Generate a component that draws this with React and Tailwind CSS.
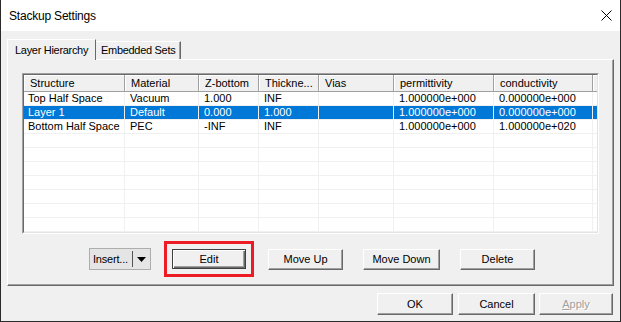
import React from "react";

const cols = [
  { name: "Structure", w: "w-[101px]" },
  { name: "Material", w: "w-[74px]" },
  { name: "Z-bottom", w: "w-[60px]" },
  { name: "Thickne...", w: "w-[60px]" },
  { name: "Vias", w: "w-[75px]" },
  { name: "permittivity", w: "w-[100px]" },
  { name: "conductivity", w: "w-[99px]" },
];

const rows = [
  ["Top Half Space", "Vacuum", "1.000", "INF", "", "1.000000e+000", "0.000000e+000"],
  ["Layer 1", "Default", "0.000", "1.000", "", "1.000000e+000", "0.000000e+000"],
  ["Bottom Half Space", "PEC", "-INF", "INF", "", "1.000000e+000", "1.000000e+020"],
  ["", "", "", "", "", "", ""],
  ["", "", "", "", "", "", ""],
  ["", "", "", "", "", "", ""],
  ["", "", "", "", "", "", ""],
  ["", "", "", "", "", "", ""],
  ["", "", "", "", "", "", ""],
  ["", "", "", "", "", "", ""],
];

const btn =
  "flex items-center justify-center bg-[#f0f0f0] border border-t-white border-l-white border-r-[#696969] border-b-[#696969] shadow-[inset_-1px_-1px_#a0a0a0]";

export default function App() {
  return (
    <div className="w-[621px] h-[322px] flex flex-col bg-[#f0f0f0] border-x border-b border-[#2b2b2b] text-[11px] text-black font-['Liberation_Sans',Arial,sans-serif] leading-none overflow-hidden">
      {/* Title bar */}
      <div className="h-[31px] shrink-0 bg-white flex items-center justify-between pl-[8px] pr-[8px]">
        <span className="text-[12px] tracking-[-0.2px]">Stackup Settings</span>
        <svg width="11" height="11" viewBox="0 0 11 11">
          <path d="M0.5 0.5 L10.5 10.5 M10.5 0.5 L0.5 10.5" stroke="#000" strokeWidth="1" />
        </svg>
      </div>

      {/* Body */}
      <div className="flex flex-col px-[6px] pt-[7px]">
        {/* Tabs */}
        <div className="flex items-end h-[21px]">
          <div className="relative z-10 -mb-px h-[21px] w-[89px] bg-[#f0f0f0] border-l border-t border-white border-r border-r-[#696969] flex items-center pl-[7px] tracking-[-0.3px] whitespace-nowrap">
            Layer Hierarchy
          </div>
          <div className="h-[18px] w-[85px] border-t border-white border-r border-r-[#696969] shadow-[inset_-1px_0_#a0a0a0] flex items-center pl-[5px] tracking-[-0.3px] whitespace-nowrap">
            Embedded Sets
          </div>
        </div>

        {/* Panel */}
        <div className="flex flex-col border border-t-white border-l-white border-r-[#696969] border-b-[#696969] shadow-[inset_-1px_-1px_#a0a0a0] pt-[13px] pl-[14px] pb-[8px]">
          {/* List */}
          <div className="w-[577px] border border-t-[#a0a0a0] border-l-[#a0a0a0] border-r-white border-b-white">
            <div className="border border-t-[#696969] border-l-[#696969] border-r-[#e3e3e3] border-b-[#e3e3e3] bg-white">
              <div className="flex h-[17px]">
                {cols.map((c) => (
                  <div
                    key={c.name}
                    className={`${c.w} shrink-0 h-full flex items-center pl-[6px] bg-[#f0f0f0] border-r border-b border-[#a0a0a0] shadow-[inset_1px_1px_#ffffff]`}
                  >
                    {c.name}
                  </div>
                ))}
                <div className="flex-1 h-full bg-[#f0f0f0] border-b border-[#a0a0a0] shadow-[inset_1px_1px_#ffffff]" />
              </div>
              {rows.map((r, i) => (
                <div
                  key={i}
                  className={`flex h-[14px] ${i === 1 ? "bg-[#0078d7] text-white" : ""}`}
                >
                  {cols.map((c, j) => (
                    <div
                      key={j}
                      className={`${c.w} shrink-0 h-full flex items-center border-r border-b border-[#f0f0f0] whitespace-nowrap ${j === 0 ? "pl-[4px]" : "pl-[5px]"}`}
                    >
                      {r[j]}
                    </div>
                  ))}
                  <div className="flex-1 h-full border-b border-[#f0f0f0]" />
                </div>
              ))}
            </div>
          </div>

          {/* Action buttons */}
          <div className="flex items-center h-[36px] mt-[7px] pl-[67px]">
            <div className="w-[62px] h-[22px] flex items-center bg-[#e5e5e5] border border-[#adadad]">
              <span className="pl-[3px] w-[42px] tracking-[-0.2px] whitespace-nowrap">Insert...</span>
              <div className="w-px h-[16px] bg-[#555]" />
              <svg width="9" height="5" viewBox="0 0 9 5" className="ml-[4px]">
                <path d="M0 0 H9 L4.5 5 Z" fill="#000" />
              </svg>
            </div>
            <div className="ml-[13px] w-[90px] h-[36px] border-[3px] border-[#ed1c24] p-[5px]">
              <div className="w-[74px] h-[20px] flex items-center justify-center bg-[#f0f0f0] border border-[#404040] shadow-[inset_1px_1px_#ffffff,inset_-1px_-1px_#696969,inset_-2px_-2px_#a0a0a0]">
                Edit
              </div>
            </div>
            <div className={`${btn} ml-[14px] w-[75px] h-[21px]`}>Move Up</div>
            <div className={`${btn} ml-[20px] w-[77px] h-[21px]`}>Move Down</div>
            <div className={`${btn} ml-[20px] w-[75px] h-[21px]`}>Delete</div>
          </div>
        </div>

        {/* Dialog buttons */}
        <div className="flex justify-end mt-[7px] pr-[1px]">
          <div className={`${btn} w-[76px] h-[22px]`}>OK</div>
          <div className={`${btn} ml-[5px] w-[77px] h-[22px]`}>Cancel</div>
          <div className={`${btn} ml-[4px] w-[74px] h-[22px] text-[#a0a0a0] [text-shadow:1px_1px_#ffffff]`}>
            <span>
              <span className="underline">A</span>pply
            </span>
          </div>
        </div>
      </div>
    </div>
  );
}
